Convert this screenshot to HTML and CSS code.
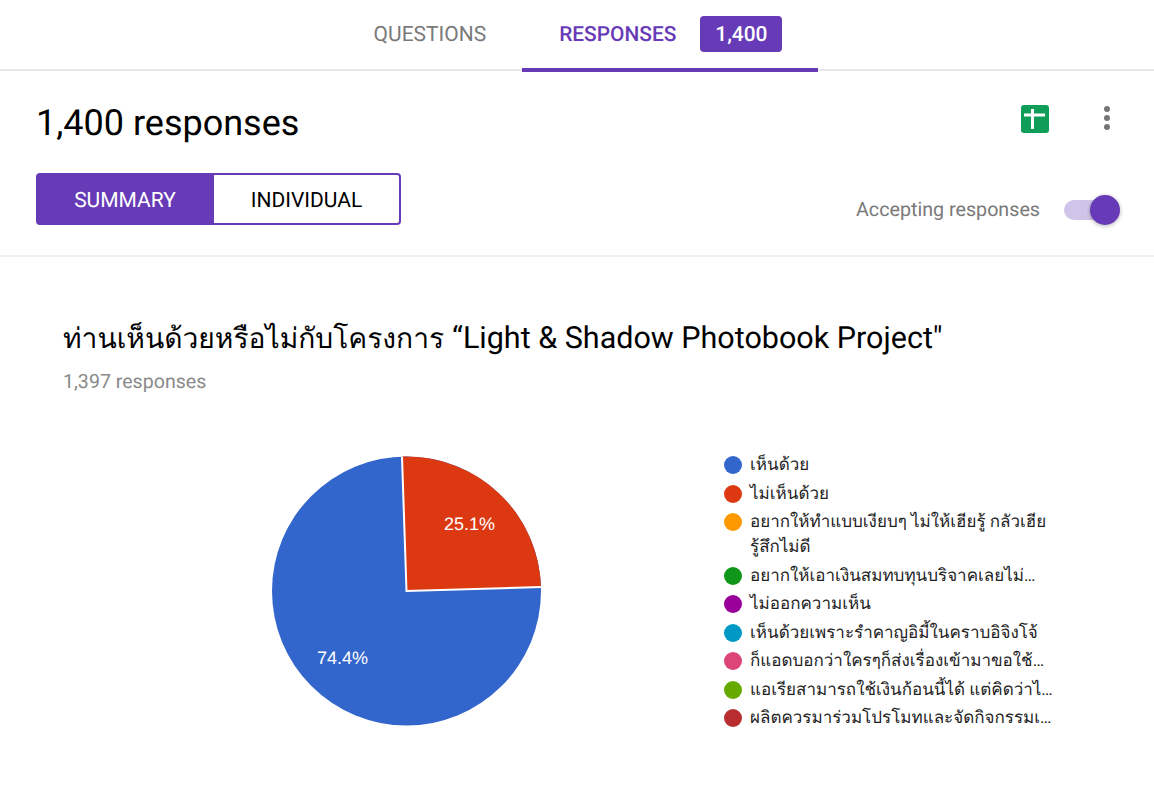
FILE: index.html
```html
<!DOCTYPE html>
<html lang="en">
<head>
  <meta charset="UTF-8" />
  <title>Responses</title>
  <link rel="stylesheet" href="styles.css">
</head>
<body>
  <nav class="tabs">
    <div class="tab">QUESTIONS</div>
    <div class="tab tab-active">RESPONSES <span class="badge">1,400</span></div>
  </nav>

  <header class="summary-head">
    <div class="head-row">
      <h1>1,400 responses</h1>
      <div class="head-icons">
        <svg class="sheets-icon" width="28" height="28" viewBox="0 0 28 28">
          <rect width="28" height="28" rx="3" fill="#0f9d58" />
          <path d="M3 8.5h21v3h-21zM10 4h3v20h-3z" fill="#fff" />
        </svg>
        <svg class="more-icon" width="8" height="26" viewBox="0 0 8 26">
          <circle cx="4" cy="4" r="3" fill="#757575" />
          <circle cx="4" cy="13" r="3" fill="#757575" />
          <circle cx="4" cy="22" r="3" fill="#757575" />
        </svg>
      </div>
    </div>
    <div class="head-row head-row-low">
      <div class="segment">
        <div class="segment-item segment-on">SUMMARY</div>
        <div class="segment-item">INDIVIDUAL</div>
      </div>
      <div class="accepting">
        <span>Accepting responses</span>
        <div class="switch"><div class="switch-knob"></div></div>
      </div>
    </div>
  </header>

  <main class="question">
    <h2>ท่านเห็นด้วยหรือไม่กับโครงการ <span class="latin">“Light &amp; Shadow Photobook Project"</span></h2>
    <div class="question-count">1,397 responses</div>

    <div class="chart-row">
      <svg class="pie" width="272" height="272" viewBox="0 0 272 272">
        <circle cx="135.5" cy="136" r="134.5" fill="#3366cc" />
        <path d="M135.5 136L131 1.6A134.5 134.5 0 0 1 270 132Z" fill="#dc3912" />
        <path d="M131 1.6L135.5 136L270 132" fill="none" stroke="#fff" stroke-width="2" />
        <text class="pie-label" x="198.5" y="75">25.1%</text>
        <text class="pie-label" x="71.5" y="209">74.4%</text>
      </svg>

      <ul class="legend">
        <li><span class="dot dot-1"></span>เห็นด้วย</li>
        <li><span class="dot dot-2"></span>ไม่เห็นด้วย</li>
        <li><span class="dot dot-3"></span>อยากให้ทำแบบเงียบๆ ไม่ให้เฮียรู้ กลัวเฮีย<br>รู้สึกไม่ดี</li>
        <li><span class="dot dot-4"></span>อยากให้เอาเงินสมทบทุนบริจาคเลยไม่…</li>
        <li><span class="dot dot-5"></span>ไม่ออกความเห็น</li>
        <li><span class="dot dot-6"></span>เห็นด้วยเพราะรำคาญอิมี้ในคราบอิจิงโจ้</li>
        <li><span class="dot dot-7"></span>ก็แอดบอกว่าใครๆก็ส่งเรื่องเข้ามาขอใช้…</li>
        <li><span class="dot dot-8"></span>แอเรียสามารถใช้เงินก้อนนี้ได้ แต่คิดว่าไ…</li>
        <li><span class="dot dot-9"></span>ผลิตควรมาร่วมโปรโมทและจัดกิจกรรมเ…</li>
      </ul>
    </div>
  </main>
</body>
</html>
```

FILE: styles.css
```css
:root {
  --purple: #673ab7;
  --grey: #7a7a7a;
  --line: #e8e8e8;
}
html, body {
  margin: 0;
  padding: 0;
  height: 786px;
  overflow: hidden;
}
body {
  font-family: Roboto, "Noto Sans", sans-serif;
  background: #fff;
  color: #000;
  text-rendering: geometricPrecision;
}
.tabs {
  display: flex;
  justify-content: center;
  height: 69px;
  padding-left: 2px;
  border-bottom: 2px solid var(--line);
}
.tab {
  display: flex;
  align-items: center;
  gap: 24px;
  height: 66px;
  padding: 2px 36px 0;
  font-size: 21px;
  font-weight: 400;
  color: var(--grey);
}
.tab-active {
  padding-left: 37px;
  font-weight: 500;
  font-size: 20.9px;
  color: var(--purple);
  border-bottom: 4px solid var(--purple);
}
.badge {
  box-sizing: border-box;
  padding-top: 1px;
  margin-top: -2px;
  background: var(--purple);
  color: #fff;
  border-radius: 4px;
  width: 82px;
  height: 36px;
  display: flex;
  align-items: center;
  justify-content: center;
}
.summary-head {
  height: 184px;
  padding: 0 34px 0 36px;
  border-bottom: 2px solid #f0f0f0;
}
.head-row {
  display: flex;
  justify-content: space-between;
}
h1 {
  margin: 28px 0 0 0;
  font-size: 36px;
  font-weight: 400;
  line-height: 48px;
}
.head-icons {
  display: flex;
  align-items: flex-start;
  gap: 54px;
  margin: 34px 0 0 0;
  padding-right: 9px;
}
.head-row-low {
  align-items: flex-end;
  margin-top: 26px;
}
.segment {
  display: flex;
  width: 365px;
  height: 52px;
  box-sizing: border-box;
  border: 2px solid var(--purple);
  border-radius: 4px;
  font-size: 21px;
}
.segment-item {
  flex: 1;
  display: flex;
  align-items: center;
  justify-content: center;
  padding-top: 3px;
}
.segment-on {
  flex: 0 0 176px;
  padding-right: 2px;
  box-sizing: border-box;
  background: var(--purple);
  color: #fff;
}
.accepting {
  display: flex;
  align-items: center;
  gap: 24px;
  margin: 0 4px 4px 0;
  color: var(--grey);
  font-size: 19.7px;
}
.switch {
  position: relative;
  width: 52px;
  height: 20px;
  border-radius: 10px;
  background: #d1c4e9;
}
.switch-knob {
  position: absolute;
  right: -4px;
  top: -5px;
  width: 30px;
  height: 30px;
  border-radius: 50%;
  background: var(--purple);
  box-shadow: 0 1px 4px rgba(0, 0, 0, 0.3);
}
.question {
  padding: 62px 0 0 63px;
}
h2 {
  margin: 0;
  font-size: 28.2px;
  font-weight: 400;
  line-height: 40px;
}
.latin {
  margin-left: 1px;
  font-size: 30.5px;
}
.question-count {
  margin-top: 9px;
  font-size: 19.6px;
  line-height: 28px;
  color: #8a8a8a;
}
.chart-row {
  display: flex;
  align-items: flex-start;
  margin-top: 59px;
}
.pie {
  margin-left: 208px;
  flex: none;
}
.pie-label {
  fill: #fff;
  font-family: "Liberation Sans", Arial, sans-serif;
  font-size: 18px;
  text-anchor: middle;
}
.legend {
  list-style: none;
  margin: -2px 0 0 181px;
  padding: 0;
  font-size: 17px;
  line-height: 25px;
  color: #222;
}
.legend li {
  position: relative;
  padding-left: 26px;
  margin-bottom: 3.5px;
  white-space: nowrap;
}
.dot {
  position: absolute;
  left: 0;
  top: 3px;
  width: 18px;
  height: 18px;
  border-radius: 50%;
}
.dot-1 { background: #3366cc; }
.dot-2 { background: #dc3912; }
.dot-3 { background: #ff9900; }
.dot-4 { background: #109618; }
.dot-5 { background: #990099; }
.dot-6 { background: #0099c6; }
.dot-7 { background: #dd4477; }
.dot-8 { background: #66aa00; }
.dot-9 { background: #b82e2e; }
```
